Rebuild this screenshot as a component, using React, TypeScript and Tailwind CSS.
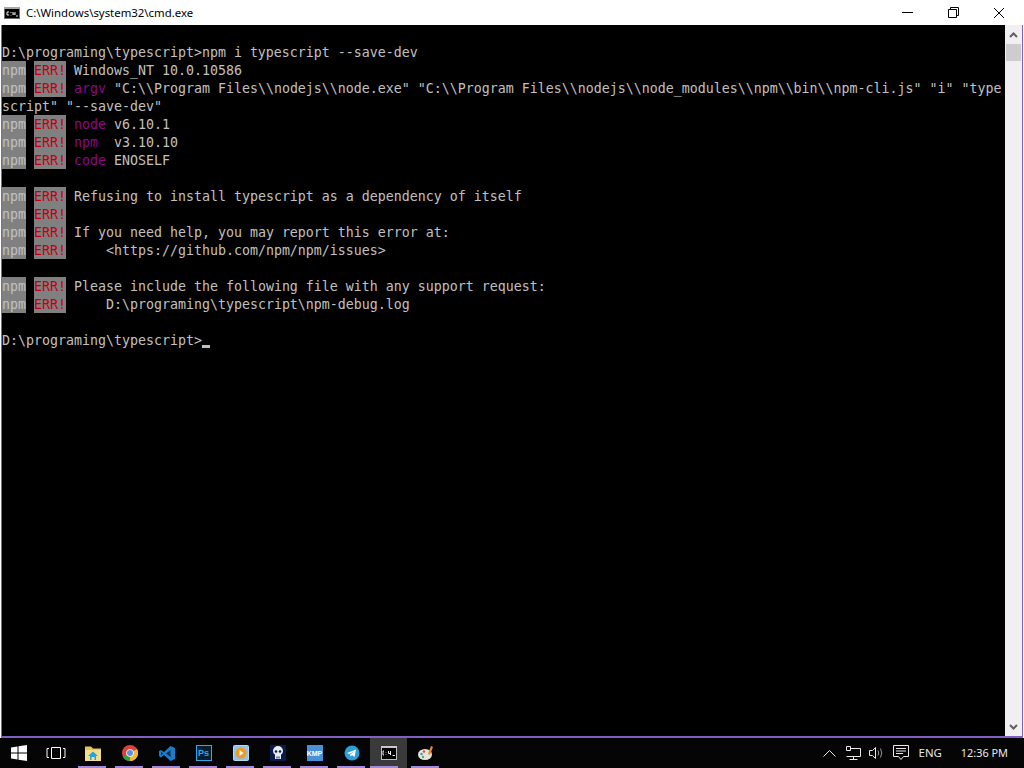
import React from "react";

const Cell = ({ className, children }: { className: string; children: React.ReactNode }) => (
  <span className={`inline-block h-[18px] align-top ${className}`}>{children}</span>
);

const Npm = ({ text, purple }: { text?: string; purple?: string }) => (
  <>
    <Cell className="bg-[#808080] text-[#c0c0c0]">npm</Cell>
    <span> </span>
    <Cell className="bg-[#808080] text-[#c00010]">ERR!</Cell>
    {purple ? (
      <>
        <span> </span>
        <span className="text-[#8a0a8a]">{purple}</span>
      </>
    ) : null}
    {text ? <span>{text}</span> : null}
  </>
);

const Row = ({ children }: { children?: React.ReactNode }) => (
  <div className="h-[18px] leading-[20px] whitespace-pre">{children}</div>
);

const Underlined = ({ children, active }: { children: React.ReactNode; active?: boolean }) => (
  <div className={`relative flex h-[30px] w-[37px] items-center justify-center ${active ? "bg-[#3a3a3a]" : ""}`}>
    {children}
    <div className={`absolute bottom-0 h-[2px] w-[28px] bg-[#a688d8] ${active ? "left-0" : "left-[4px]"}`} />
  </div>
);

const Slot = ({ children }: { children: React.ReactNode }) => (
  <div className="flex h-[30px] w-[37px] items-center justify-center">{children}</div>
);

export default function App() {
  return (
    <div className="flex h-[768px] w-[1024px] flex-col overflow-hidden bg-black">
      <div className="flex h-[738px] flex-col bg-white">
        <div className="flex h-[25px] items-center bg-white text-black">
          <svg width="16" height="12" viewBox="0 0 16 12" className="ml-[4px]">
            <rect x="0.5" y="0.5" width="15" height="11" fill="#000" stroke="#6e6e6e" />
            <rect x="0" y="0" width="16" height="2" fill="#a8a8a8" />
            <path d="M3 5h2M3 5v3M3 8h2M7 5v1M7 8v0.5M9 5v3M9 7h2M11 5v3M12 9h2" stroke="#e8e8e8" strokeWidth="1" fill="none" />
          </svg>
          <span className="ml-[6px] font-['Noto_Sans',sans-serif] text-[11.4px] leading-[25px]">C:\Windows\system32\cmd.exe</span>
          <div className="ml-auto mr-[2px] flex h-[25px]">
            <div className="flex w-[46px] items-center justify-center">
              <svg width="11" height="11" viewBox="0 0 11 11"><path d="M0 5.5h11" stroke="#000" /></svg>
            </div>
            <div className="flex w-[46px] items-center justify-center">
              <svg width="11" height="11" viewBox="0 0 11 11" fill="none" stroke="#000"><path d="M0.5 2.5h8v8h-8zM2.5 2.5v-2h8v8h-2" /></svg>
            </div>
            <div className="flex w-[46px] items-center justify-center">
              <svg width="12" height="12" viewBox="0 0 12 12" fill="none" stroke="#000"><path d="M1 1l10 10M11 1L1 11" /></svg>
            </div>
          </div>
        </div>
        <div className="flex min-h-0 flex-1 flex-col px-[1px]">
          <div className="flex min-h-0 flex-1 border-b-2 border-l border-r border-[#8060c4]">
            <div className="flex-1 overflow-hidden bg-black font-['DejaVu_Sans_Mono',monospace] text-[13.29px] text-[#c0c0c0]">
              <Row />
              <Row>D:\programing\typescript&gt;npm i typescript --save-dev</Row>
              <Row><Npm text=" Windows_NT 10.0.10586" /></Row>
              <Row><Npm purple="argv" text={' "C:\\\\Program Files\\\\nodejs\\\\node.exe" "C:\\\\Program Files\\\\nodejs\\\\node_modules\\\\npm\\\\bin\\\\npm-cli.js" "i" "type'} /></Row>
              <Row>script" "--save-dev"</Row>
              <Row><Npm purple="node" text=" v6.10.1" /></Row>
              <Row><Npm purple="npm" text="  v3.10.10" /></Row>
              <Row><Npm purple="code" text=" ENOSELF" /></Row>
              <Row />
              <Row><Npm text=" Refusing to install typescript as a dependency of itself" /></Row>
              <Row><Npm /></Row>
              <Row><Npm text=" If you need help, you may report this error at:" /></Row>
              <Row><Npm text="     <https://github.com/npm/npm/issues>" /></Row>
              <Row />
              <Row><Npm text=" Please include the following file with any support request:" /></Row>
              <Row><Npm text="     D:\programing\typescript\npm-debug.log" /></Row>
              <Row />
              <Row>D:\programing\typescript&gt;<span className="relative inline-block h-[18px] w-[8px] align-top"><span className="absolute bottom-[1px] left-0 h-[3px] w-[8px] bg-[#c0c0c0]" /></span></Row>
            </div>
            <div className="flex w-[17px] flex-col items-center bg-[#f0f0f0]">
              <div className="flex h-[19px] w-[17px] items-center justify-center">
                <svg width="9" height="6" viewBox="0 0 9 6" fill="none" stroke="#606060" strokeWidth="2"><path d="M1 5l3.500-3.500L8 5" /></svg>
              </div>
              <div className="h-[17px] w-[15px] bg-[#cdcdcd]" />
              <div className="mt-auto flex h-[18px] w-[17px] items-center justify-center">
                <svg width="9" height="6" viewBox="0 0 9 6" fill="none" stroke="#606060" strokeWidth="2"><path d="M1 1l3.500 3.500L8 1" /></svg>
              </div>
            </div>
          </div>
        </div>
      </div>

      <div className="flex h-[30px] items-center bg-[#050505]">
        <Slot>
          <svg width="16" height="16" viewBox="0 0 16 16" fill="#fff"><path d="M0 2.500l6.500-1v6H0zM7.500 1.300L16 0v7.500H7.500zM0 8.500h6.500v6l-6.500-1zM7.500 8.500H16V16l-8.500-1.300z" /></svg>
        </Slot>
        <Slot>
          <svg width="20" height="14" viewBox="0 0 20 14" fill="none" stroke="#fff"><path d="M5.500 1.500h9v11h-9zM3 2.500H1v9h2M17 2.500h2v9h-2" /></svg>
        </Slot>
        <Underlined>
          <svg width="16" height="15" viewBox="0 0 16 15"><path d="M0 0.500h6l2 2h8V4H0z" fill="#e8c35c" /><rect x="0" y="4" width="16" height="11" fill="#f6dd8c" /><path d="M8 5.500l5 4.500h-2v4H5v-4H3z" fill="#23a3e0" /><rect x="6.500" y="11" width="3" height="3" fill="#f6dd8c" /></svg>
        </Underlined>
        <Underlined>
          <svg width="16" height="16" viewBox="0 0 16 16"><circle cx="8" cy="8" r="8" fill="#d9443a" /><path d="M8 8L1 12a8 8 0 0 0 7 4z" fill="#2c9f4b" /><path d="M8 8l7-4a8 8 0 0 1-7 12z" fill="#f2bb2b" /><circle cx="8" cy="8" r="3.800" fill="#fff" /><circle cx="8" cy="8" r="3" fill="#5a8fe8" /></svg>
        </Underlined>
        <Underlined>
          <svg width="16" height="15" viewBox="0 0 16 15"><path d="M11.500 0L16 2v11l-4.500 2L5 9l-3 2.500L0 10V5l2-1L5 6z" fill="#1c7cc8" /><path d="M11.500 4v7L7 7.500z" fill="#0d2a48" /><path d="M2 5.500l2 2-2 2z" fill="#0d2a48" /></svg>
        </Underlined>
        <Underlined>
          <div className="flex h-[16px] w-[16px] items-center justify-center border border-[#2fa8e8] bg-[#04202f] font-['Liberation_Sans',sans-serif] text-[9px] font-bold leading-none text-[#2fa8e8]">Ps</div>
        </Underlined>
        <Underlined>
          <svg width="16" height="16" viewBox="0 0 16 16"><rect x="0.500" y="0.500" width="15" height="15" rx="1" fill="#8fc3ea" stroke="#b8d8f0" /><circle cx="8" cy="8" r="5.500" fill="#f29a1f" /><path d="M6.500 5l4 3-4 3z" fill="#fff" /></svg>
        </Underlined>
        <Underlined>
          <svg width="16" height="16" viewBox="0 0 16 16"><rect width="16" height="16" fill="#0a1a4a" /><path d="M3 6a5 5 0 0 1 10 0c0 2-1 3-2 3.500V14H5V9.500C4 9 3 8 3 6z" fill="#e8eef5" /><circle cx="6" cy="6.500" r="1.300" fill="#0a1a4a" /><circle cx="10" cy="6.500" r="1.300" fill="#0a1a4a" /><path d="M7 11.500v2M9 11.500v2" stroke="#0a1a4a" /></svg>
        </Underlined>
        <Underlined>
          <div className="flex h-[16px] w-[16px] items-center justify-center bg-[#4a90d8] font-['Liberation_Sans',sans-serif] text-[7px] font-bold leading-none text-white">KMP</div>
        </Underlined>
        <Underlined>
          <svg width="16" height="16" viewBox="0 0 16 16"><circle cx="8" cy="8" r="7.500" fill="#2a9fd8" /><path d="M3 8l9-3.500L10.500 12 8 10l-1.500 1.500L6 9.500l4.500-3L5 9z" fill="#fff" /></svg>
        </Underlined>
        <Underlined active>
          <svg width="16" height="14" viewBox="0 0 16 14"><rect x="0.500" y="0.500" width="15" height="13" fill="#000" stroke="#bdbdbd" /><rect x="0" y="0" width="16" height="2" fill="#c8c8c8" /><path d="M3 5H2v4h1M5 6v.5M5 8v.5M7.500 5v2.500H10M9.500 5v4M11.500 9.500H14" fill="none" stroke="#f0f0f0" /></svg>
        </Underlined>
        <Underlined>
          <svg width="16" height="16" viewBox="0 0 16 16"><ellipse cx="7" cy="9.500" rx="7" ry="5.500" fill="#e8e4d8" /><circle cx="3.500" cy="9" r="1.300" fill="#3f9bd8" /><circle cx="6" cy="6.500" r="1.200" fill="#e04a3a" /><circle cx="5" cy="12" r="1.200" fill="#58b058" /><path d="M10 9l3-8 2 1-3 8z" fill="#e8892c" /></svg>
        </Underlined>
        <div className="flex-1" />
        <div className="flex h-[30px] items-center text-[#e8e8e8]">
          <svg width="13" height="7" viewBox="0 0 13 7" fill="none" stroke="#e8e8e8" className="mr-[10px]"><path d="M0.500 6.500l6-6 6 6" /></svg>
          <svg width="15" height="14" viewBox="0 0 15 14" fill="none" stroke="#e8e8e8" className="mr-[8px]"><path d="M4.500 2.500H14.500V10.500H0.500M7.500 10.500v3M3.500 13.500h8" /><path d="M0.500 0.500h4v4h-4z" /></svg>
          <svg width="15" height="14" viewBox="0 0 15 14" fill="none" stroke="#e8e8e8" className="mr-[9px]"><path d="M0.500 4.500h3l3-3v11l-3-3h-3z" /><path d="M9 4.500q1.500 2.500 0 5M11.500 2.500q2.500 4.500 0 9" stroke="#999" /></svg>
          <svg width="16" height="16" viewBox="0 0 16 16" fill="none" stroke="#e8e8e8" className="mr-[10px]"><path d="M0.500 0.500h15v11h-5l-2.500 3-2.500-3h-5zM3 3.500h10M3 6h10M3 8.500h7" /></svg>
          <span className="mr-[19px] font-['Noto_Sans',sans-serif] text-[11.4px] leading-[30px]">ENG</span>
          <span className="mr-[16px] font-['Noto_Sans',sans-serif] text-[10.9px] leading-[30px]">12:36 PM</span>
        </div>
      </div>
    </div>
  );
}
